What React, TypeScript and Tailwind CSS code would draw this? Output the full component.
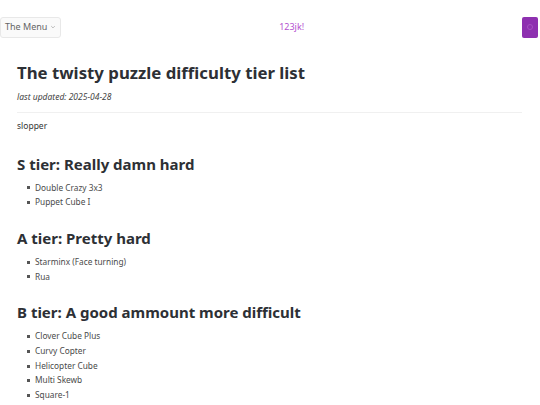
import React from "react";

const tiers = [
  { title: "S tier: Really damn hard", items: ["Double Crazy 3x3", "Puppet Cube I"] },
  { title: "A tier: Pretty hard", items: ["Starminx (Face turning)", "Rua"] },
  {
    title: "B tier: A good ammount more difficult",
    items: ["Clover Cube Plus", "Curvy Copter", "Helicopter Cube", "Multi Skewb", "Square-1"],
  },
];

export default function App() {
  return (
    <div className="min-h-screen bg-white text-[#333] overflow-hidden" style={{ fontFamily: '"Noto Sans", "Open Sans", sans-serif' }}>
      <div className="flex items-center justify-between h-[54px]">
        <button className="flex items-center gap-[3px] h-[21px] pl-[4px] pr-[4px] border border-[#e8e8e8] rounded-[3px] bg-[#fafafa] text-[9px] text-[#666]">
          The Menu
          <svg width="6" height="6" viewBox="0 0 10 10" fill="none" stroke="#aaa" strokeWidth="1.3">
            <path d="M2 3.5l3 3 3-3" />
          </svg>
        </button>
        <span className="text-[9px] text-[#b450d0]">123jk!</span>
        <div className="flex items-center justify-center w-[16px] h-[21px] rounded-[2px] bg-[#8e30b0] mr-[2px]">
          <span className="w-[6px] h-[6px] rounded-full border border-[#a552c2]" />
        </div>
      </div>
      <div className="flex flex-col px-[17px]">
        <h1 className="text-[16.8px] font-bold text-[#2d3035] mt-[7px] leading-[24px]">The twisty puzzle difficulty tier list</h1>
        <p className="italic text-[8.5px] text-[#444] mt-[6px]">last updated: 2025-04-28</p>
        <hr className="border-0 h-px bg-[#f0f0f0] mt-[8px] mr-[1px]" />
        <p className="text-[8.5px] text-[#333] mt-[7px] mb-[3px]">slopper</p>
        {tiers.map((t) => (
          <div key={t.title} className="mt-[17px]">
            <h2 className="text-[15px] font-bold text-[#2d3035] leading-[22px]">{t.title}</h2>
            <ul className="mt-[6px] pl-[10px]">
              {t.items.map((i) => (
                <li key={i} className="flex items-center gap-[5px] text-[8.3px] text-[#4a4a4a] leading-[14.7px]">
                  <span className="w-[3px] h-[3px] bg-[#555]" />
                  {i}
                </li>
              ))}
            </ul>
          </div>
        ))}
      </div>
    </div>
  );
}
